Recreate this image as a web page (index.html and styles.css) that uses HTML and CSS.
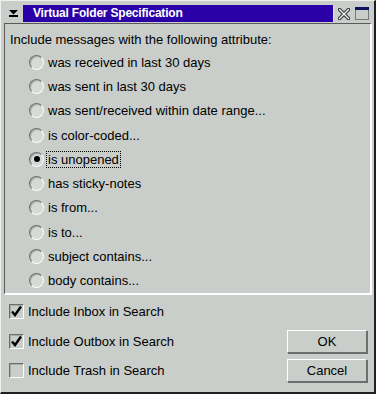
FILE: index.html
```html
<!DOCTYPE html>
<html lang="en">
<head>
    <meta charset="UTF-8">
    <title>Virtual Folder Specification</title>
    <link rel="stylesheet" href="styles.css">
</head>
<body>
    <div class="window">
        <div class="titlebar">
            <div class="menu-btn">
                <svg width="9" height="7" viewBox="0 0 9 7"><path d="M0 0H9L4.5 4.5Z" fill="#000"/><rect x="0" y="5" width="9" height="2" fill="#000"/></svg>
            </div>
            <div class="caption">Virtual Folder Specification</div>
            <div class="tb-icons">
                <svg width="12" height="12" viewBox="0 0 12 12">
                    <path d="M1.5 1.5L10.5 10.5M10.5 1.5L1.5 10.5" stroke="#303030" stroke-width="3.4" stroke-linecap="round"/>
                    <path d="M1.5 1.5L10.5 10.5M10.5 1.5L1.5 10.5" stroke="#f4f4f4" stroke-width="1.4" stroke-linecap="round"/>
                </svg>
                <svg width="14" height="13" viewBox="0 0 14 13">
                    <rect x="0.5" y="0.5" width="13" height="12" fill="none" stroke="#202020" stroke-dasharray="1 1"/>
                    <rect x="0" y="0" width="14" height="3" fill="#101060"/>
                </svg>
            </div>
        </div>
        <div class="panel">
            <p class="label">Include messages with the following attribute:</p>
            <ul class="options">
                <li><span class="radio"></span><span class="opt">was received in last 30 days</span></li>
                <li><span class="radio"></span><span class="opt">was sent in last 30 days</span></li>
                <li><span class="radio"></span><span class="opt">was sent/received within date range...</span></li>
                <li><span class="radio"></span><span class="opt">is color-coded...</span></li>
                <li><span class="radio on"></span><span class="opt focus">is unopened</span></li>
                <li><span class="radio"></span><span class="opt">has sticky-notes</span></li>
                <li><span class="radio"></span><span class="opt">is from...</span></li>
                <li><span class="radio"></span><span class="opt">is to...</span></li>
                <li><span class="radio"></span><span class="opt">subject contains...</span></li>
                <li><span class="radio"></span><span class="opt">body contains...</span></li>
            </ul>
        </div>
        <div class="footer">
            <div class="checks">
                <div class="check-row">
                    <span class="checkbox"><svg width="13" height="13" viewBox="0 0 13 13"><path d="M2 6.5L5 10L11 1.5" fill="none" stroke="#000" stroke-width="2.4"/></svg></span>
                    Include Inbox in Search
                </div>
                <div class="check-row">
                    <span class="checkbox"><svg width="13" height="13" viewBox="0 0 13 13"><path d="M2 6.5L5 10L11 1.5" fill="none" stroke="#000" stroke-width="2.4"/></svg></span>
                    Include Outbox in Search
                </div>
                <div class="check-row">
                    <span class="checkbox"></span>
                    Include Trash in Search
                </div>
            </div>
            <div class="buttons">
                <button>OK</button>
                <button>Cancel</button>
            </div>
        </div>
    </div>
</body>
</html>
```

FILE: styles.css
```css
body {
    margin: 0;
    background-color: #c9ceca;
    font-family: "Liberation Sans", Arial, sans-serif;
    font-size: 13px;
    color: #000;
}
.window {
    width: 376px;
    height: 394px;
    box-sizing: border-box;
    background-color: #c9ceca;
    border-top: 1px solid #eef0ee;
    border-left: 1px solid #eef0ee;
    border-right: 2px solid #202020;
    border-bottom: 2px solid #202020;
    padding: 4px 2px 0 3px;
    display: flex;
    flex-direction: column;
}
.titlebar {
    height: 17px;
    display: flex;
    align-items: center;
    margin-left: 1px;
}
.menu-btn {
    width: 17px;
    height: 17px;
    display: flex;
    align-items: center;
    justify-content: center;
}
.caption {
    flex: 1;
    height: 17px;
    margin-left: 1px;
    background-color: #2a00a8;
    border-right: 1px solid #e0e0e0;
    color: #fff;
    font-weight: bold;
    font-size: 12px;
    letter-spacing: -0.2px;
    line-height: 17px;
    padding-left: 10px;
}
.tb-icons {
    display: flex;
    align-items: center;
    gap: 5px;
    padding: 0 3px 0 4px;
}
.panel {
    height: 272px;
    box-sizing: border-box;
    margin-top: 1px;
    border-top: 1px solid #5a5a5a;
    border-left: 1px solid #5a5a5a;
    border-right: 2px solid #fff;
    border-bottom: 2px solid #fff;
    padding: 8px 5px 0 5px;
}
.label {
    margin: 0;
    line-height: 16px;
}
.options {
    list-style: none;
    margin: 2px 0 0 0;
    padding: 0 0 0 19px;
}
.options li {
    height: 24.3px;
    display: flex;
    align-items: center;
}
.radio {
    width: 15px;
    height: 15px;
    box-sizing: border-box;
    border-radius: 50%;
    border: 1px solid;
    border-color: #6e6e6e #fcfcfc #fcfcfc #6e6e6e;
    box-shadow: inset 1px 1px 0 #a8aca9;
    background-color: #d6dad7;
    display: flex;
    align-items: center;
    justify-content: center;
}
.radio.on::after {
    content: "";
    width: 6px;
    height: 6px;
    border-radius: 50%;
    background-color: #000;
}
.opt {
    margin-left: 2px;
    padding: 0 1px;
    line-height: 15px;
    border: 1px solid transparent;
}
.opt.focus {
    border: 1px dotted #000;
}
.footer {
    flex: 1;
    display: flex;
    justify-content: space-between;
    padding-top: 2px;
}
.check-row {
    height: 29.5px;
    display: flex;
    align-items: center;
    gap: 4px;
    padding-left: 5px;
}
.checkbox {
    width: 15px;
    height: 15px;
    box-sizing: border-box;
    border: 1px solid;
    border-color: #6e6e6e #fcfcfc #fcfcfc #6e6e6e;
    box-shadow: inset 1px 1px 0 #a8aca9;
    display: flex;
    align-items: center;
    justify-content: center;
}
.buttons {
    display: flex;
    flex-direction: column;
    justify-content: flex-end;
    gap: 6px;
    padding: 0 5px 10px 0;
}
button {
    width: 80px;
    height: 23px;
    box-sizing: border-box;
    font-family: "Liberation Sans", Arial, sans-serif;
    font-size: 13px;
    color: #000;
    background-color: #c9ceca;
    border: 1px solid;
    border-color: #fff #6e6e6e #6e6e6e #fff;
    box-shadow: 1px 1px 0 #6e6e6e;
    padding: 0;
}
```
